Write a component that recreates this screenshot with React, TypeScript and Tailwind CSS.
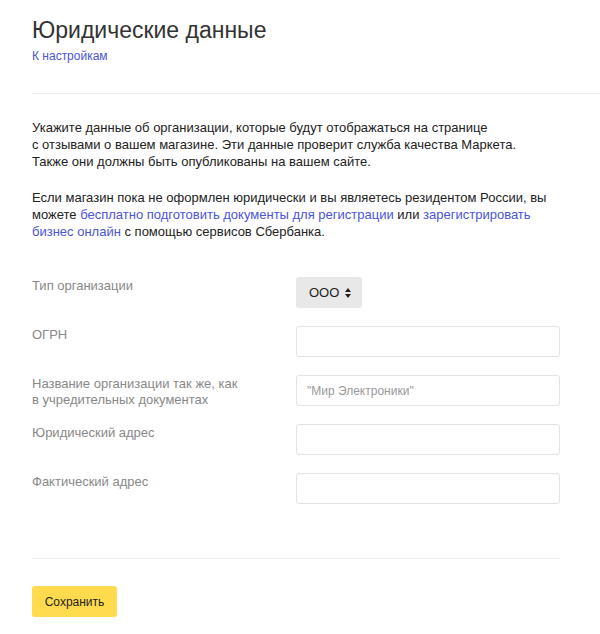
import React from "react";

const fields = [
    { label: ["ОГРН"], placeholder: "" },
    {
        label: ["Название организации так же, как", "в учредительных документах"],
        placeholder: "\"Мир Электроники\"",
    },
    { label: ["Юридический адрес"], placeholder: "" },
    { label: ["Фактический адрес"], placeholder: "" },
];

const Row = ({ label, children }: { label: string[]; children: React.ReactNode }) => (
    <div className="flex h-[31px] items-start">
        <div className="w-[264px] pt-[1px] text-[13px] leading-[16px] text-[#888]">
            {label.map((l) => (
                <div key={l}>{l}</div>
            ))}
        </div>
        {children}
    </div>
);

export default function App() {
    return (
        <div
            className="bg-white min-h-[634px] w-[600px] pl-[32px] text-[#222]"
            style={{ fontFamily: '"Liberation Sans", Arial, sans-serif' }}
        >
            <h1 className="pt-[17px] text-[23px] leading-[26px] text-[#333]">
                Юридические данные
            </h1>
            <a href="#" className="mt-[6px] block text-[12px] leading-[15px] text-[#4a55d8]">
                К настройкам
            </a>
            <div className="mt-[29px] border-t border-[#eee]" />

            <div className="mt-[25px] w-[520px] text-[13px] leading-[17px]">
                <p>
                    Укажите данные об организации, которые будут отображаться на странице
                    <br />
                    с отзывами о вашем магазине. Эти данные проверит служба качества Маркета.
                    <br />
                    Также они должны быть опубликованы на вашем сайте.
                </p>
                <p className="mt-[19px]">
                    Если магазин пока не оформлен юридически и вы являетесь резидентом России, вы
                    можете{" "}
                    <a href="#" className="text-[#4a55d8]">
                        бесплатно подготовить документы для регистрации
                    </a>{" "}
                    или{" "}
                    <a href="#" className="text-[#4a55d8]">
                        зарегистрировать бизнес онлайн
                    </a>{" "}
                    с помощью сервисов Сбербанка.
                </p>
            </div>

            <div className="mt-[37px] flex w-[528px] flex-col gap-[18px]">
                <Row label={["Тип организации"]}>
                    <button className="flex h-[31px] items-center gap-[6px] rounded-[3px] bg-[#e8e8e8] pl-[13px] pr-[11px] text-[13px] text-[#222]">
                        ООО
                        <svg width="6" height="10" viewBox="0 0 6 10">
                            <path d="M3 0L6 4H0z" fill="#222" />
                            <path d="M3 10L0 6h6z" fill="#222" />
                        </svg>
                    </button>
                </Row>
                {fields.map((f) => (
                    <Row key={f.label[0]} label={f.label}>
                        <input
                            placeholder={f.placeholder}
                            className="h-[31px] w-[264px] rounded-[3px] border border-[#e3e3e3] px-[10px] text-[12px] outline-none placeholder:text-[#999]"
                        />
                    </Row>
                ))}
            </div>

            <div className="mt-[54px] w-[528px] border-t border-[#eee]" />

            <button className="mt-[27px] h-[31px] w-[85px] rounded-[3px] bg-[#ffdb4d] text-[12px] text-[#222]">
                Сохранить
            </button>
        </div>
    );
}
